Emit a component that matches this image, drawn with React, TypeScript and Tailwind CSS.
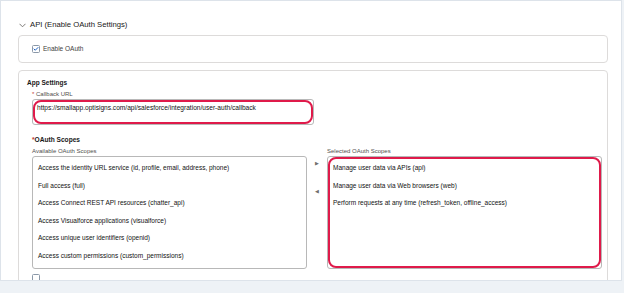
import { Check } from "lucide-react";

const available = [
  "Access the identity URL service (id, profile, email, address, phone)",
  "Full access (full)",
  "Access Connect REST API resources (chatter_api)",
  "Access Visualforce applications (visualforce)",
  "Access unique user identifiers (openid)",
  "Access custom permissions (custom_permissions)",
];

const selected = [
  "Manage user data via APIs (api)",
  "Manage user data via Web browsers (web)",
  "Perform requests at any time (refresh_token, offline_access)",
];

function Checkbox({ checked }: { checked?: boolean }) {
  return (
    <span className="grid h-[8px] w-[8px] shrink-0 place-items-center rounded-[1.5px] border border-[#8b98a8] bg-white">
      {checked && <Check className="h-[6px] w-[6px] text-[#1b5fc1]" strokeWidth={4} />}
    </span>
  );
}

// red annotation drawn over a field
function Highlight() {
  return (
    <span className="pointer-events-none absolute inset-0 rounded-[8px] border-[2.5px] border-[#df1a4a]" />
  );
}

function ScopeList({ items, marked }: { items: string[]; marked?: boolean }) {
  return (
    <div className="relative h-[113px] w-[275px] rounded-[3px] border border-[#b8b8b8] bg-white">
      <ul className="flex flex-col gap-[7.6px] pl-[5px] pt-[6px]">
        {items.map((s) => (
          <li key={s} className="text-[6.5px] leading-[10px] text-[#111]">
            {s}
          </li>
        ))}
      </ul>
      {marked && <Highlight />}
    </div>
  );
}

export default function App() {
  return (
    <div className="h-[293px] w-[624px] overflow-hidden bg-[#eef2f6] font-['Liberation_Sans',Arial,sans-serif] text-[#181818]">
      <div className="h-[281px] w-[622px] overflow-hidden border border-[#dde3ea] bg-white pl-[17px] pr-[13px] pt-[17px]">
        <div className="flex h-[14px] items-center gap-[4px] pl-[1px]">
          <svg width="7" height="5" viewBox="0 0 7 5" fill="none" className="text-[#706e6b]">
            <path d="M0.5 0.8 L3.5 3.8 L6.5 0.8" stroke="currentColor" strokeWidth="0.9" />
          </svg>
          <span className="text-[7.7px] leading-[14px] text-[#181818]">API (Enable OAuth Settings)</span>
        </div>

        <div className="mt-[3px] flex h-[28px] items-center gap-[3px] rounded-[4px] border border-[#dddbda] pl-[13px]">
          <Checkbox checked />
          <span className="text-[6.5px] text-[#3e3e3c]">Enable OAuth</span>
        </div>

        <div className="mt-[7px] h-[260px] rounded-[4px] border border-[#dddbda] pl-[8px] pt-[7px]">
          <h3 className="text-[6.5px] font-bold leading-[10px] text-[#181818]">App Settings</h3>

          <div className="pl-[5px]">
            <div className="mt-[1px] text-[6px] leading-[10px] text-[#514f4d]">
              <span className="text-[#c23934]">*</span> Callback URL
            </div>
            <div className="relative h-[26px] w-[282px] rounded-[3px] border border-[#b8b8b8] bg-white pl-[4px] pt-[3px]">
              <div className="text-[6.6px] leading-[10px] text-[#111]">
                https://smallapp.optisigns.com/api/salesforce/integration/user-auth/callback
              </div>
              <Highlight />
            </div>

            <div className="mt-[10px] text-[6.6px] font-bold leading-[10px] text-[#181818]">
              <span className="text-[#c23934]">*</span>OAuth Scopes
            </div>

            <div className="mt-[1px] flex">
              <div className="flex flex-col">
                <span className="text-[6px] leading-[10px] text-[#514f4d]">Available OAuth Scopes</span>
                <ScopeList items={available} />
              </div>
              <div className="flex w-[20px] flex-col items-center pt-[14px] text-[5px] leading-[6px] text-[#706e6b]">
                <span>▶</span>
                <span className="mt-[22px]">◀</span>
              </div>
              <div className="flex flex-col">
                <span className="text-[6px] leading-[10px] text-[#514f4d]">Selected OAuth Scopes</span>
                <ScopeList items={selected} marked />
              </div>
            </div>

            <div className="mt-[5px]">
              <Checkbox />
            </div>
          </div>
        </div>
      </div>
    </div>
  );
}
